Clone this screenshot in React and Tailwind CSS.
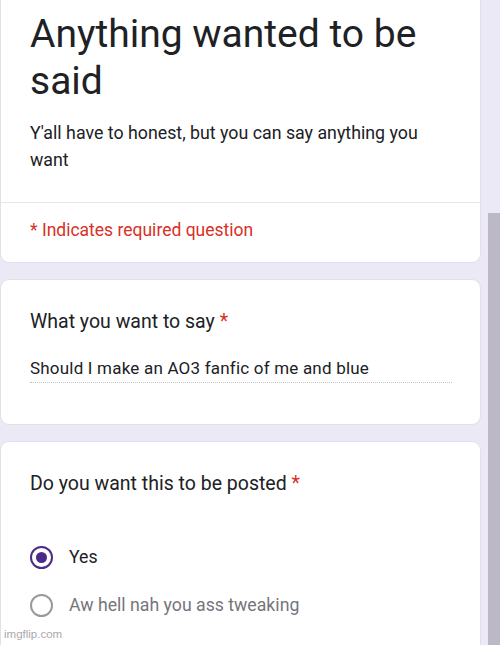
import React from "react";

function Radio({ checked }) {
  return checked ? (
    <span className="flex h-[23px] w-[23px] shrink-0 items-center justify-center rounded-full border-[2.5px] border-[#4b2a88]">
      <span className="h-[11px] w-[11px] rounded-full bg-[#4b2a88]" />
    </span>
  ) : (
    <span className="h-[23px] w-[23px] shrink-0 rounded-full border-[2px] border-[#9a9a9e]" />
  );
}

export default function App() {
  return (
    <div
      className="relative h-[645px] w-[500px] overflow-hidden bg-[#ece9f6]"
      style={{ fontFamily: "Roboto, 'Noto Sans', sans-serif" }}
    >
      <div className="flex">
        <div className="flex w-[481px] flex-col gap-[16px]">
          {/* Card 1 */}
          <div className="rounded-b-[9px] border border-t-0 border-[#e2dfe8] bg-white">
            <div className="px-[29px] pt-[11px] pb-[29px]">
              <div className="text-[39px] leading-[47px] text-[#202124]">
                Anything wanted to be said
              </div>
              <div className="mt-[14px] pr-[20px] text-[17.8px] leading-[27px] text-[#202124]">
                Y'all have to honest, but you can say anything you want
              </div>
            </div>
            <div className="h-px bg-[#e6e6e8]" />
            <div className="px-[29px] pt-[15px] pb-[20px] text-[17.5px] leading-[24px] text-[#d93025]">
              * Indicates required question
            </div>
          </div>

          {/* Card 2 */}
          <div className="h-[146px] rounded-[9px] border border-[#e2dfe8] bg-white px-[29px] pt-[30px]">
            <div className="text-[19.5px] leading-[24px] text-[#202124]">
              What you want to say <span className="text-[#d93025]">*</span>
            </div>
            <div className="mt-[23px] w-[422px] border-b border-dotted border-[#c4c4c8] pb-[3px] text-[17px] leading-[22px] tracking-[0.2px] text-[#202124]">
              Should I make an AO3 fanfic of me and blue
            </div>
          </div>

          {/* Card 3 */}
          <div className="h-[260px] rounded-t-[9px] border border-b-0 border-[#e2dfe8] bg-white px-[29px] pt-[30px]">
            <div className="text-[19.5px] leading-[24px] text-[#202124]">
              Do you want this to be posted <span className="text-[#d93025]">*</span>
            </div>
            <div className="mt-[49px] flex flex-col gap-[24px]">
              <div className="flex h-[24px] items-center gap-[16px]">
                <Radio checked />
                <span className="text-[17.7px] text-[#202124]">Yes</span>
              </div>
              <div className="flex h-[24px] items-center gap-[16px]">
                <Radio />
                <span className="text-[17.7px] text-[#75757c]">
                  Aw hell nah you ass tweaking
                </span>
              </div>
            </div>
          </div>
        </div>
        <div className="ml-[7px] flex flex-1 flex-col">
          <div className="h-[213px]" />
          <div className="flex-1 bg-[#bcb8c6]" />
        </div>
      </div>
      <div className="absolute bottom-[2px] left-[4px] text-[11.5px] text-[#a9a9ad]" style={{ fontFamily: "'Liberation Sans', Arial, sans-serif" }}>
        imgflip.com
      </div>
    </div>
  );
}
